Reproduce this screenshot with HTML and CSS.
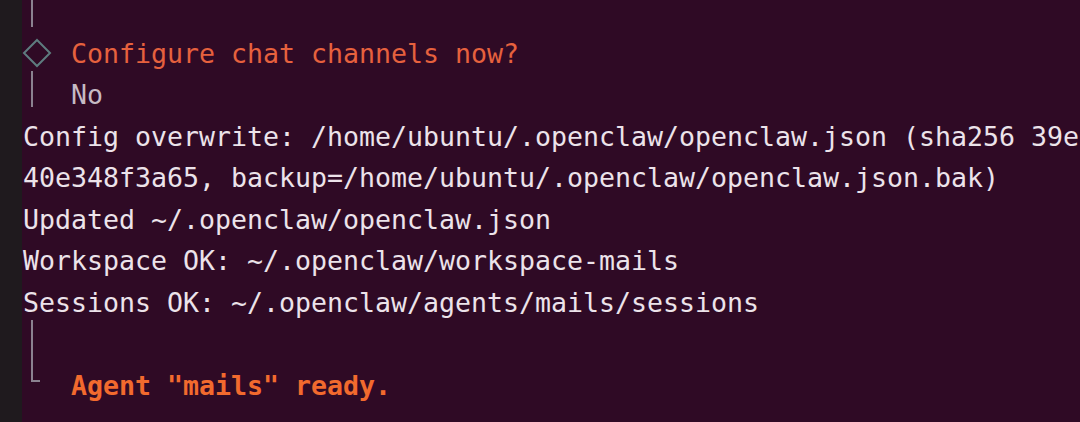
FILE: index.html
```html
<!DOCTYPE html>
<html>
<head>
<meta charset="utf-8">
<link rel="stylesheet" href="styles.css">
</head>
<body>
<div class="window">
  <div class="strip"></div>
  <div class="term">
    <div class="line"><div class="gutter"><div class="bar bar-top"></div></div></div>
    <div class="line"><div class="gutter"><svg class="diamond" width="30" height="30" viewBox="0 0 30 30"><polygon points="15,2 28,15 15,28 2,15" fill="none" stroke="#5e7c7f" stroke-width="2"/></svg></div><span class="prompt">Configure chat channels now?</span></div>
    <div class="line"><div class="gutter"><div class="bar bar-mid"></div></div><span class="answer">No</span></div>
    <div class="line">Config overwrite: /home/ubuntu/.openclaw/openclaw.json (sha256 39e</div>
    <div class="line">40e348f3a65, backup=/home/ubuntu/.openclaw/openclaw.json.bak)</div>
    <div class="line">Updated ~/.openclaw/openclaw.json</div>
    <div class="line">Workspace OK: ~/.openclaw/workspace-mails</div>
    <div class="line">Sessions OK: ~/.openclaw/agents/mails/sessions</div>
    <div class="line"><div class="gutter"><div class="bar bar-full"></div></div></div>
    <div class="line"><div class="gutter"><div class="bar bar-end"></div></div><span class="done">Agent "mails" ready.</span></div>
  </div>
</div>
</body>
</html>
```

FILE: styles.css
```css
html, body {
  margin: 0;
  padding: 0;
  width: 1080px;
  height: 422px;
  overflow: hidden;
  background: #2f0a25;
}

.window {
  display: flex;
  width: 1080px;
  height: 422px;
  overflow: hidden;
}

.strip {
  flex: 0 0 22px;
  background: #1f1a1e;
}

.term {
  flex: 1;
  padding-left: 1px;
  margin-top: -9px;
  font-family: "DejaVu Sans Mono", "Liberation Mono", monospace;
  font-size: 26.58px;
  line-height: 41.5px;
  color: #ece3ea;
}

.line {
  display: flex;
  align-items: flex-start;
  height: 41.5px;
  white-space: pre;
}

.gutter {
  flex: 0 0 48px;
  height: 41.5px;
  display: flex;
  align-items: flex-start;
  padding-left: 8px;
  box-sizing: border-box;
}

.bar {
  border-left: 2px solid #8b8290;
  box-sizing: border-box;
}

.bar-top { height: 36px; }
.bar-mid { height: 36px; margin-top: -3px; }
.bar-full { height: 41.5px; margin-top: -3px; }
.bar-end {
  height: 20px;
  width: 9px;
  margin-top: -3px;
  border-bottom: 2px solid #8b8290;
}

.diamond {
  margin-left: -9px;
  margin-top: 5px;
  display: block;
}

.prompt { color: #e6613e; }
.answer { color: #c6bac4; }
.done { color: #f26a2e; font-weight: bold; }
```
